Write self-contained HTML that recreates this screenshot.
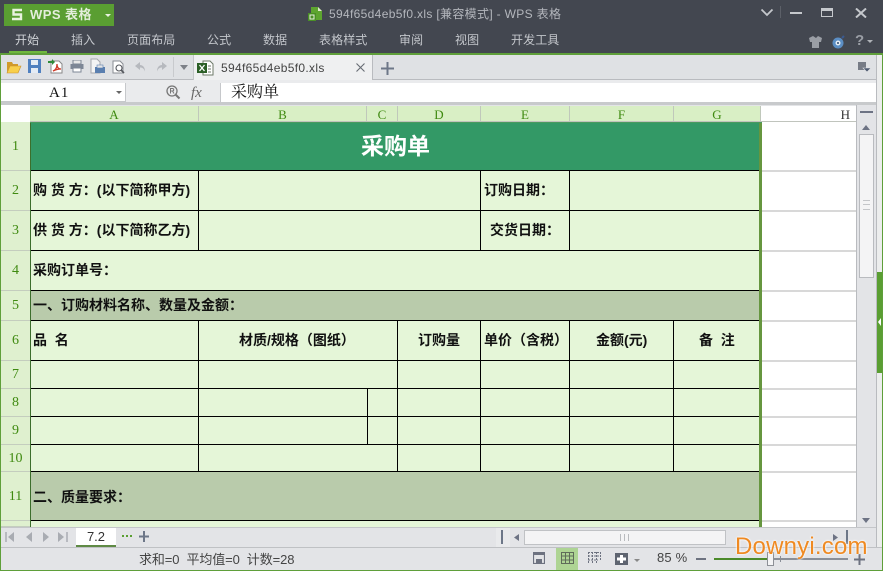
<!DOCTYPE html>
<html><head><meta charset="utf-8">
<style>
html,body{margin:0;padding:0;background:#e3e4e7}
#p{position:relative;width:883px;height:571px;overflow:hidden;background:#e3e4e7;font-family:"Liberation Sans","Noto Sans CJK SC",sans-serif}
#p div,#p svg{position:absolute}
.m{color:#c3c6cb;font-size:12px;top:32px;line-height:16px;white-space:nowrap;letter-spacing:.1px}
.h{position:absolute;top:106px;height:16px;background:#d9efc5;border-right:1px solid #c0c8bb;box-sizing:border-box;color:#3f8a10;font:13px/17px "Liberation Serif",serif;text-align:center}
.r{position:absolute;left:1px;width:29px;background:#dff0cf;border-bottom:1px solid #c4cdbe;box-sizing:border-box;color:#3f8a10;font:14px "Liberation Serif",serif;text-align:center}
.l{position:absolute;background:#000}
.g{position:absolute;left:762px;width:94px;height:2px;background:#d8d8d8}
.t{position:absolute;color:#111;font-weight:bold;font-size:14px;line-height:16px;white-space:nowrap}
</style></head><body><div id="p">

<!-- title bar -->
<div style="left:0;top:0;width:883px;height:53px;background:#434750"></div>
<div style="left:4px;top:4px;width:110px;height:22px;background:#5a9e32"></div>
<svg style="left:11px;top:8px" width="12" height="13"><path d="M11 2H2.500V6.500H10V11H1" fill="none" stroke="#e8f2df" stroke-width="2.400"/></svg>
<div style="left:30px;top:6px;color:#e4eedc;font-size:13px;font-weight:bold;line-height:18px;white-space:nowrap;letter-spacing:.45px">WPS 表格</div>
<svg style="left:105px;top:14px" width="6" height="4"><path d="M0 0h6L3 3z" fill="#e8f2df"/></svg>
<svg style="left:308px;top:6px" width="15" height="15"><path d="M3 1h7l4 4v9H3z" fill="#5da52f"/><path d="M10 1l4 4h-4z" fill="#dfeacb"/><rect x="0" y="7" width="8" height="8" fill="#4a8f26"/><rect x="2" y="9" width="4" height="4" fill="none" stroke="#e8f2df"/></svg>
<div style="left:329px;top:6px;color:#b4b7bd;font-size:12px;line-height:16px;white-space:nowrap;letter-spacing:.33px">594f65d4eb5f0.xls [兼容模式] - WPS 表格</div>
<svg style="left:760px;top:8px" width="14" height="9"><path d="M1.500 1.500L7 7l5.500-5.500" stroke="#c5c8cc" stroke-width="1.800" fill="none"/></svg>
<div style="left:780px;top:6px;width:1px;height:12px;background:#5c6068"></div>
<div style="left:790px;top:12px;width:12px;height:2px;background:#c5c8cc"></div>
<svg style="left:821px;top:8px" width="13" height="10"><rect x=".5" y=".5" width="11" height="8" fill="none" stroke="#c5c8cc"/><rect x="0" y="0" width="12" height="3" fill="#c5c8cc"/></svg>
<svg style="left:855px;top:8px" width="13" height="10"><path d="M1 .5l10 9M11 .5l-10 9" stroke="#c5c8cc" stroke-width="2"/></svg>

<div class="m" style="left:15px;color:#cfd2d6">开始</div>
<div style="left:9px;top:51px;width:38px;height:2px;background:#6fb83e"></div>
<div class="m" style="left:71px">插入</div>
<div class="m" style="left:127px">页面布局</div>
<div class="m" style="left:207px">公式</div>
<div class="m" style="left:263px">数据</div>
<div class="m" style="left:319px">表格样式</div>
<div class="m" style="left:399px">审阅</div>
<div class="m" style="left:455px">视图</div>
<div class="m" style="left:511px">开发工具</div>
<svg style="left:809px;top:35px" width="13" height="13"><path d="M4 1L0 3l1 4h2v6h7V7h2l1-4-4-2-2 2z" fill="#9a9ea5"/></svg>
<svg style="left:832px;top:35px" width="14" height="14"><circle cx="6" cy="8" r="5.500" fill="#5b8ec4"/><circle cx="6" cy="8" r="2.500" fill="#e8eef5"/><circle cx="6" cy="8" r="1" fill="#2c4a70"/><path d="M10 3l2-2" stroke="#3a5a90" stroke-width="2"/></svg>
<div style="left:855px;top:32px;color:#9a9ea5;font:bold 15px/18px 'Liberation Sans'">?</div>
<svg style="left:867px;top:40px" width="6" height="4"><path d="M0 0h6L3 3z" fill="#b0b3b8"/></svg>

<!-- toolbar -->
<div style="left:1px;top:55px;width:192px;height:24px;background:#dfe1e4"></div>
<div style="left:193px;top:55px;width:179px;height:25px;background:#eff0f1"></div>
<div style="left:372px;top:55px;width:1px;height:25px;background:#b9bbbf"></div>
<div style="left:373px;top:55px;width:504px;height:24px;background:#dfe1e4"></div>
<div style="left:1px;top:79px;width:192px;height:1px;background:#b9bbbf"></div>
<div style="left:373px;top:79px;width:504px;height:1px;background:#b9bbbf"></div>
<div style="left:193px;top:55px;width:1px;height:25px;background:#c5c7ca"></div>
<svg style="left:6px;top:61px" width="16" height="13"><path d="M1 1h5l1 2h5v2H4L1 11z" fill="#d19a2a"/><path d="M4 5h11l-3 7H1z" fill="#f8cf4a" stroke="#c9902a" stroke-width=".6"/></svg>
<svg style="left:28px;top:59px" width="14" height="14"><rect width="13" height="14" fill="#4f80c0"/><rect x="3" y="1" width="7" height="5" fill="#e5ecf5"/><rect x="3" y="9" width="7" height="5" fill="#e5ecf5"/></svg>
<svg style="left:48px;top:58px" width="15" height="16"><path d="M3 3h8l3 3v9H3z" fill="#fff" stroke="#888"/><path d="M5 13c3-1 4-4 4-7 0 3 1 5 4 5-3 0-6 1-8 2z" fill="none" stroke="#cf3a28" stroke-width="1.300"/><path d="M0 3h4V1l3 3-3 3V5H0z" fill="#2f8a3a"/></svg>
<svg style="left:70px;top:60px" width="14" height="13"><rect x="3" y="0" width="8" height="4" fill="#e8e8e8" stroke="#7d8796"/><rect x="0.500" y="4" width="13" height="5" fill="#7d8796"/><rect x="3" y="8" width="8" height="4" fill="#fff" stroke="#7d8796"/></svg>
<svg style="left:90px;top:58px" width="15" height="16"><path d="M1 1h6l3 3v11H1z" fill="#f4f4f4" stroke="#a5a8ae"/><rect x="5" y="9" width="10" height="6" fill="#5a7fb0"/><rect x="7" y="7" width="6" height="3" fill="#e6e6e6" stroke="#5a7fb0" stroke-width=".6"/></svg>
<svg style="left:112px;top:60px" width="14" height="15"><path d="M1 1h7l3 3v9H1z" fill="#fff" stroke="#8a8d93"/><circle cx="7" cy="8" r="3" fill="#fff" stroke="#55585e" stroke-width="1.100"/><path d="M9 10l3 3" stroke="#55585e" stroke-width="1.600"/></svg>
<svg style="left:134px;top:62px" width="13" height="11"><path d="M6 0L1 4l5 4V5.500c2.500 0 4 1.200 5 4 0-4-2-6.500-5-6.500z" fill="#b6b9be"/></svg>
<svg style="left:155px;top:62px" width="13" height="11"><path d="M7 0l5 4-5 4V5.500c-2.500 0-4 1.200-5 4 0-4 2-6.500 5-6.500z" fill="#b6b9be"/></svg>
<div style="left:173px;top:57px;width:1px;height:20px;background:#c8cacd"></div>
<svg style="left:180px;top:65px" width="8" height="5"><path d="M0 0h8L4 5z" fill="#7d8188"/></svg>
<svg style="left:197px;top:60px" width="17" height="16"><path d="M6 1h7l3 3v11H6z" fill="#fff" stroke="#6d7a68"/><rect x="0" y="3" width="10" height="10" fill="#2b5f26"/><path d="M2.500 5l5 6M7.500 5l-5 6" stroke="#fff" stroke-width="1.300"/><path d="M11 6h3M11 9h3M11 12h3" stroke="#6d7a68"/></svg>
<div style="left:221px;top:60px;color:#444;font-size:12px;line-height:16px;white-space:nowrap;letter-spacing:.33px">594f65d4eb5f0.xls</div>
<svg style="left:356px;top:63px" width="9" height="9"><path d="M.5.5l8 8M8.500.5l-8 8" stroke="#666b73" stroke-width="1.100"/></svg>
<svg style="left:381px;top:62px" width="13" height="13"><path d="M6.500 0v13M0 6.500h13" stroke="#6d7788" stroke-width="2"/></svg>
<svg style="left:858px;top:62px" width="13" height="11"><rect width="8" height="8" fill="#777c86"/><path d="M5 6h8l-4 4z" fill="#4e5a70" stroke="#dfe1e4" stroke-width=".6"/></svg>

<!-- formula bar -->
<div style="left:1px;top:80px;width:876px;height:25px;background:#eaebed"></div>
<div style="left:1px;top:83px;width:125px;height:19px;background:#fff;border-right:1px solid #c6c8cb;border-bottom:1px solid #c6c8cb;box-sizing:border-box"></div>
<div style="left:49px;top:84px;color:#111;font:15px/18px 'Liberation Serif',serif;letter-spacing:1px">A1</div>
<svg style="left:116px;top:91px" width="6" height="4"><path d="M0 0h6L3 3z" fill="#666"/></svg>
<svg style="left:165px;top:84px" width="16" height="16"><circle cx="7" cy="7" r="5" fill="none" stroke="#777" stroke-width="1.300"/><path d="M10.500 10.500l4 4" stroke="#777" stroke-width="2"/><path d="M5.500 9.500V4.500h2a1.200 1.200 0 010 2.500h-2M7.500 7l1.500 2.500" stroke="#777" fill="none"/></svg>
<div style="left:191px;top:83px;color:#666;font:italic 15px/20px 'Liberation Serif'">fx</div>
<div style="left:220px;top:83px;width:657px;height:19px;background:#fff;border-left:1px solid #c6c8cb;box-sizing:border-box"></div>
<div style="left:231px;top:82px;color:#111;font-family:'Liberation Serif','Noto Serif CJK SC',serif;font-size:16px;line-height:21px">采购单</div>
<div style="left:0;top:102px;width:877px;height:3px;background:#c8cacc"></div>

<!-- column headers -->
<div style="left:1px;top:105px;width:29px;height:17px;background:#fff"></div>
<div class="h" style="left:30px;width:169px">A</div>
<div class="h" style="left:199px;width:168px">B</div>
<div class="h" style="left:367px;width:31px">C</div>
<div class="h" style="left:398px;width:83px">D</div>
<div class="h" style="left:481px;width:89px">E</div>
<div class="h" style="left:570px;width:104px">F</div>
<div class="h" style="left:674px;width:87px">G</div>
<div style="left:761px;top:106px;width:96px;height:16px;background:#fff;color:#333;font:13px/17px 'Liberation Serif',serif;text-align:right;padding-right:7px;box-sizing:border-box">H</div>
<div style="left:30px;top:121px;width:827px;height:1px;background:#c0c4bd"></div>

<!-- row headers -->
<div class="r" style="top:122px;height:49px;line-height:49px">1</div>
<div class="r" style="top:171px;height:40px;line-height:40px">2</div>
<div class="r" style="top:211px;height:40px;line-height:40px">3</div>
<div class="r" style="top:251px;height:40px;line-height:40px">4</div>
<div class="r" style="top:291px;height:30px;line-height:30px">5</div>
<div class="r" style="top:321px;height:40px;line-height:40px">6</div>
<div class="r" style="top:361px;height:28px;line-height:28px">7</div>
<div class="r" style="top:389px;height:28px;line-height:28px">8</div>
<div class="r" style="top:417px;height:28px;line-height:28px">9</div>
<div class="r" style="top:445px;height:27px;line-height:27px">10</div>
<div class="r" style="top:472px;height:49px;line-height:49px">11</div>
<div class="r" style="top:521px;height:6px"></div>

<!-- grid right empty area -->
<div style="left:762px;top:122px;width:95px;height:405px;background:#fff"></div>
<div class="g" style="top:170px"></div><div class="g" style="top:210px"></div><div class="g" style="top:250px"></div><div class="g" style="top:290px"></div><div class="g" style="top:320px"></div><div class="g" style="top:360px"></div><div class="g" style="top:388px"></div><div class="g" style="top:416px"></div><div class="g" style="top:444px"></div><div class="g" style="top:471px"></div><div class="g" style="top:520px"></div>

<!-- sheet body -->
<div style="left:30px;top:122px;width:730px;height:405px;background:#e5f6d8"></div>
<div style="left:31px;top:122px;width:729px;height:48px;background:#339966"></div>
<div style="left:31px;top:291px;width:729px;height:29px;background:#b9cbab"></div>
<div style="left:31px;top:472px;width:729px;height:48px;background:#b9cbab"></div>
<div style="left:361px;top:132px;color:#fff;font-size:23px;font-weight:bold;line-height:28px">采购单</div>

<!-- lines -->
<div class="l" style="left:30px;top:170px;width:730px;height:1px"></div>
<div class="l" style="left:30px;top:210px;width:730px;height:1px"></div>
<div class="l" style="left:30px;top:250px;width:730px;height:1px"></div>
<div class="l" style="left:30px;top:290px;width:730px;height:1px"></div>
<div class="l" style="left:30px;top:320px;width:730px;height:1px"></div>
<div class="l" style="left:30px;top:360px;width:730px;height:1px"></div>
<div class="l" style="left:30px;top:388px;width:730px;height:1px"></div>
<div class="l" style="left:30px;top:416px;width:730px;height:1px"></div>
<div class="l" style="left:30px;top:444px;width:730px;height:1px"></div>
<div class="l" style="left:30px;top:471px;width:730px;height:1px"></div>
<div class="l" style="left:30px;top:520px;width:730px;height:1px"></div>
<div class="l" style="left:198px;top:170px;width:1px;height:81px"></div>
<div class="l" style="left:480px;top:170px;width:1px;height:81px"></div>
<div class="l" style="left:569px;top:170px;width:1px;height:81px"></div>
<div class="l" style="left:198px;top:320px;width:1px;height:152px"></div>
<div class="l" style="left:397px;top:320px;width:1px;height:152px"></div>
<div class="l" style="left:480px;top:320px;width:1px;height:152px"></div>
<div class="l" style="left:569px;top:320px;width:1px;height:152px"></div>
<div class="l" style="left:673px;top:320px;width:1px;height:152px"></div>
<div class="l" style="left:367px;top:388px;width:1px;height:57px"></div>
<div style="left:30px;top:122px;width:1px;height:405px;background:#3c6e2c"></div>
<div style="left:759px;top:122px;width:3px;height:405px;background:#66963f"></div>
<div style="left:30px;top:122px;width:732px;height:1px;background:#4a9a5e"></div>

<!-- text -->
<div class="t" style="left:33px;top:182px">购 货 方：(以下简称甲方)</div>
<div class="t" style="left:33px;top:222px">供 货 方：(以下简称乙方)</div>
<div class="t" style="left:33px;top:262px">采购订单号：</div>
<div class="t" style="left:33px;top:297px">一、订购材料名称、数量及金额：</div>
<div class="t" style="left:33px;top:332px">品&nbsp;&nbsp;名</div>
<div class="t" style="left:239px;top:332px">材质/规格（图纸）</div>
<div class="t" style="left:418px;top:332px">订购量</div>
<div class="t" style="left:484px;top:332px">单价（含税）</div>
<div class="t" style="left:596px;top:332px">金额(元)</div>
<div class="t" style="left:699px;top:332px">备&nbsp;&nbsp;注</div>
<div class="t" style="left:484px;top:182px">订购日期：</div>
<div class="t" style="left:490px;top:222px">交货日期：</div>
<div class="t" style="left:33px;top:489px">二、质量要求：</div>

<!-- vertical scrollbar -->
<div style="left:856px;top:105px;width:21px;height:422px;background:#e3e4e7;border-left:1px solid #b9bbbf;box-sizing:border-box"></div>
<div style="left:860px;top:111px;width:13px;height:2px;background:#6d7384"></div>
<svg style="left:862px;top:125px" width="8" height="5"><path d="M4 0l4 5H0z" fill="#6d7384"/></svg>
<div style="left:859px;top:134px;width:15px;height:144px;background:#f4f4f5;border:1px solid #b9bbbf;box-sizing:border-box"></div>
<div style="left:863px;top:200px;width:7px;height:1px;background:#c4c6c9"></div>
<div style="left:863px;top:204px;width:7px;height:1px;background:#c4c6c9"></div>
<div style="left:863px;top:209px;width:7px;height:1px;background:#c4c6c9"></div>
<svg style="left:862px;top:518px" width="8" height="5"><path d="M0 0h8L4 5z" fill="#6d7384"/></svg>

<!-- sheet tabs -->
<div style="left:1px;top:527px;width:876px;height:20px;background:#e3e4e7"></div>
<div style="left:1px;top:527px;width:876px;height:1px;background:#c4c6c9"></div>
<div style="left:1px;top:547px;width:881px;height:1px;background:#bfc1c4"></div>
<svg style="left:5px;top:531px" width="70" height="12"><path d="M1 1v10" stroke="#a9acb2" stroke-width="1.500"/><path d="M9 1v10L3 6z M27 1v10l-6-5z M38 1v10l6-5z M53 1v10l6-5z" fill="#a9acb2"/><path d="M62 1v10" stroke="#a9acb2" stroke-width="1.500"/></svg>
<div style="left:76px;top:528px;width:40px;height:19px;background:#fff;border-bottom:2px solid #5f8a45;box-sizing:border-box;color:#333;font-size:13px;line-height:18px;text-align:center">7.2</div>
<svg style="left:122px;top:535px" width="10" height="3"><path d="M0 1h2M4 1h2M8 1h2" stroke="#5a9e32" stroke-width="2"/></svg>
<svg style="left:139px;top:531px" width="10" height="11"><path d="M5 0v11M0 5.500h10" stroke="#6d7788" stroke-width="2"/></svg>
<div style="left:496px;top:528px;width:14px;height:19px;background:#e9eaec"></div>
<div style="left:501px;top:530px;width:2px;height:14px;background:#6d7788"></div>
<svg style="left:514px;top:534px" width="5" height="7"><path d="M5 0v7L0 3.500z" fill="#6d7384"/></svg>
<div style="left:524px;top:530px;width:202px;height:15px;background:#f4f4f5;border:1px solid #c0c2c5;box-sizing:border-box"></div>
<div style="left:620px;top:534px;width:1px;height:7px;background:#b9bbbe"></div>
<div style="left:624px;top:534px;width:1px;height:7px;background:#b9bbbe"></div>
<div style="left:628px;top:534px;width:1px;height:7px;background:#b9bbbe"></div>
<svg style="left:833px;top:534px" width="5" height="7"><path d="M0 0v7l5-3.500z" fill="#6d7384"/></svg>
<div style="left:846px;top:530px;width:2px;height:14px;background:#6d7788"></div>

<!-- right strip and window edge -->
<div style="left:876px;top:55px;width:6px;height:492px;background:#eceded;border-left:1px solid #b9bbbf;box-sizing:border-box"></div>
<div style="left:877px;top:272px;width:6px;height:101px;background:#5a9e32"></div>
<svg style="left:878px;top:318px" width="4" height="8"><path d="M3 0v8L0 4z" fill="#fff"/></svg>
<div style="left:0;top:53px;width:883px;height:2px;background:#5f9f3a"></div>
<div style="left:0;top:53px;width:1px;height:518px;background:#5f9f3a"></div>
<div style="left:882px;top:53px;width:1px;height:518px;background:#5f9f3a"></div>
<div style="left:0;top:570px;width:883px;height:1px;background:#5f9f3a"></div>

<!-- status bar -->
<div style="left:139px;top:552px;color:#444;font-size:13px;line-height:16px;white-space:nowrap;letter-spacing:-.1px">求和=0&nbsp;&nbsp;平均值=0&nbsp;&nbsp;计数=28</div>
<svg style="left:533px;top:552px" width="12" height="12"><rect x=".5" y=".5" width="11" height="11" fill="none" stroke="#6d7280" stroke-width="1.200"/><rect x="0" y="0" width="12" height="3" fill="#6d7280"/><rect x="3" y="7" width="6" height="5" fill="#6d7280"/></svg>
<div style="left:556px;top:548px;width:22px;height:22px;background:#aed494"></div>
<svg style="left:561px;top:552px" width="13" height="12"><path d="M0 .5h13M0 4h13M0 8h13M0 11.500h13M.5 0v12M4.500 0v12M8.500 0v12M12.500 0v12" stroke="#5f6b5a"/></svg>
<svg style="left:588px;top:552px" width="13" height="12"><path d="M0 .5h13M0 4h13M0 8h10M.5 0v12M4.500 0v12M8.500 0v12M12.500 0v9" stroke="#6d7280" stroke-dasharray="2 1"/></svg>
<svg style="left:615px;top:553px" width="13" height="12"><rect width="13" height="12" fill="#5e6470"/><path d="M6.500 2v8M2 6h9" stroke="#fff" stroke-width="3"/></svg>
<svg style="left:634px;top:559px" width="6" height="4"><path d="M0 0h6L3 3z" fill="#888"/></svg>
<div style="left:657px;top:549px;color:#444;font-size:13px;line-height:18px;white-space:nowrap;letter-spacing:.2px">85 %</div>
<div style="left:696px;top:558px;width:10px;height:2px;background:#6d7280"></div>
<div style="left:714px;top:558px;width:54px;height:2px;background:#4b8a2a"></div>
<div style="left:768px;top:558px;width:80px;height:2px;background:#8a8f98"></div>
<div style="left:780px;top:556px;width:1px;height:6px;background:#8a8f98"></div>
<div style="left:767px;top:552px;width:7px;height:14px;background:#f4f4f5;border:1px solid #8d9096;box-sizing:border-box"></div>
<svg style="left:854px;top:554px" width="11" height="11"><path d="M5.500 0v11M0 5.500h11" stroke="#6d7280" stroke-width="2"/></svg>
<div style="left:735px;top:533px;color:#ef8a22;font-size:24px;line-height:28px;white-space:nowrap;letter-spacing:.2px;text-shadow:0 0 2px #fff,0 0 2px #fff">Downyi.com</div>

</div></body></html>
